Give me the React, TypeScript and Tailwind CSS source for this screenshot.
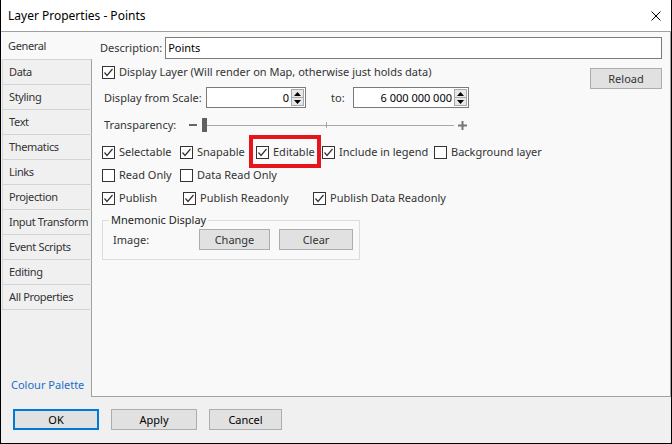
import React from 'react'

const txt = 'text-[#333333]'

function Check({ checked, label, className = '' }: { checked?: boolean; label: string; className?: string }) {
  return (
    <div className={`flex h-[16px] items-center ${className}`}>
      <div className="flex h-[13px] w-[13px] shrink-0 items-center justify-center border border-[#333333] bg-white">
        {checked && (
          <svg width="11" height="11" viewBox="0 0 11 11">
            <polyline points="1.5,5.5 4,8.5 9.5,2" fill="none" stroke="#333333" strokeWidth="1.2" />
          </svg>
        )}
      </div>
      <span className="ml-[4px] whitespace-nowrap">{label}</span>
    </div>
  )
}

function Spin() {
  return (
    <div className="my-[1px] mr-[1px] flex w-[13px] flex-col border border-[#a8a8a8] bg-[#e8e8e8]">
      <div className="flex flex-1 items-center justify-center border-b border-[#a8a8a8]">
        <svg width="7" height="4" viewBox="0 0 7 4"><polygon points="0,4 7,4 3.5,0" fill="#000" /></svg>
      </div>
      <div className="flex flex-1 items-center justify-center">
        <svg width="7" height="4" viewBox="0 0 7 4"><polygon points="0,0 7,0 3.5,4" fill="#000" /></svg>
      </div>
    </div>
  )
}

function Btn({ label, className = '' }: { label: string; className?: string }) {
  return (
    <div className={`flex h-[21px] items-center justify-center border border-[#adadad] bg-[#e1e1e1] ${className}`}>
      {label}
    </div>
  )
}

const tabs = ['Data', 'Styling', 'Text', 'Thematics', 'Links', 'Projection', 'Input Transform', 'Event Scripts', 'Editing', 'All Properties']

export default function App() {
  return (
    <div className={`flex h-[444px] w-[672px] flex-col whitespace-nowrap border-x border-b border-black bg-[#f0f0f0] font-['Noto_Sans',sans-serif] text-[11px] leading-[16px] ${txt}`}>
      {/* title bar */}
      <div className="flex h-[32px] shrink-0 items-center justify-between border-b border-[#a0a0a0] bg-white pl-[7px] pr-[10px] text-[12px] text-black">
        <span>Layer Properties - Points</span>
        <svg width="10" height="10" viewBox="0 0 10 10">
          <path d="M0.5 0.5 L9.5 9.5 M9.5 0.5 L0.5 9.5" stroke="#000" strokeWidth="1" />
        </svg>
      </div>

      <div className="flex h-[365px] shrink-0">
        {/* tabs */}
        <div className="flex w-[91px] shrink-0 flex-col tracking-[-0.35px]">
          <div className="flex h-[27px] items-center bg-[#f9f9f9] pl-[7px]">General</div>
          {tabs.map(t => (
            <div key={t} className="ml-[1px] flex h-[25px] items-center overflow-hidden border-l border-r border-t border-l-[#dadada] border-r-[#a0a0a0] border-t-[#d4d4d4] bg-[#f0f0f0] pl-[6px]">
              {t}
            </div>
          ))}
          <div className="flex flex-1 flex-col justify-end border-r border-t border-r-[#a0a0a0] border-t-[#d4d4d4] pb-[4px] pl-[10px] tracking-normal text-[#1a6fc9]">
            Colour Palette
          </div>
        </div>

        {/* panel */}
        <div className="flex flex-1 flex-col border-b border-r border-[#a0a0a0] bg-[#f9f9f9] px-[8px] pt-[5px]">
          <div className="flex h-[22px] items-center">
            <span>Description:</span>
            <div className="ml-[3px] flex h-[22px] flex-1 items-center border border-[#7a7a7a] bg-white pl-[2px] text-black">Points</div>
          </div>

          <div className="mt-[5px] flex h-[16px] items-start justify-between">
            <Check checked label="Display Layer (Will render on Map, otherwise just holds data)" className="ml-[2px]" />
            <Btn label="Reload" className="mt-[4px] w-[72px] shrink-0" />
          </div>

          <div className="mt-[7px] flex h-[21px] items-center">
            <span className="ml-[4px] w-[102px]">Display from Scale:</span>
            <div className="flex h-[21px] w-[100px] border border-[#7a7a7a] bg-white">
              <div className="flex flex-1 items-center justify-end pr-[2px] text-black">0</div>
              <Spin />
            </div>
            <span className="ml-[25px] w-[22px]">to:</span>
            <div className="flex h-[21px] w-[116px] border border-[#7a7a7a] bg-white">
              <div className="flex flex-1 items-center justify-end pr-[2px] text-black">6 000 000 000</div>
              <Spin />
            </div>
          </div>

          <div className="mt-[9px] flex h-[16px] items-center">
            <span className="ml-[4px] w-[85px]">Transparency:</span>
            <div className="h-[2px] w-[8px] bg-[#666666]" />
            <div className="relative ml-[5px] flex h-[16px] w-[252px] items-center">
              <div className="h-[1px] w-full bg-[#a8a8a8]" />
              <div className="absolute left-0 top-[1px] h-[14px] w-[5px] bg-[#606060]" />
              <div className="absolute left-[124px] top-[5px] h-[6px] w-[1px] bg-[#a8a8a8]" />
            </div>
            <svg className="ml-[4px]" width="9" height="9" viewBox="0 0 9 9">
              <path d="M0 4.5 H9 M4.5 0 V9" stroke="#777777" strokeWidth="2" />
            </svg>
          </div>

          <div className="mt-[11px] flex h-[16px] items-center pl-[2px]">
            <Check checked label="Selectable" className="w-[78px]" />
            <Check checked label="Snapable" className="w-[76px]" />
            <div className="relative w-[66px]">
              <Check checked label="Editable" />
              <div className="absolute -left-[7px] -top-[9px] h-[33px] w-[72px] border-[4px] border-[#e8141c]" />
            </div>
            <Check checked label="Include in legend" className="w-[112px]" />
            <Check label="Background layer" />
          </div>

          <div className="mt-[7px] flex h-[16px] items-center pl-[2px]">
            <Check label="Read Only" className="w-[78px]" />
            <Check label="Data Read Only" />
          </div>

          <div className="mt-[7px] flex h-[16px] items-center pl-[2px]">
            <Check checked label="Publish" className="w-[81px]" />
            <Check checked label="Publish Readonly" className="w-[130px]" />
            <Check checked label="Publish Data Readonly" />
          </div>

          <fieldset className="ml-[2px] mt-[6px] w-[257px] border border-[#dcdcdc] pb-[9px] pl-[10px] pr-[6px] pt-[1px]">
            <legend className="-ml-[4px] px-[2px] text-[#1e1e1e]">Mnemonic Display</legend>
            <div className="flex items-center">
              <span className="w-[86px]">Image:</span>
              <Btn label="Change" className="w-[71px]" />
              <Btn label="Clear" className="ml-[9px] w-[74px]" />
            </div>
          </fieldset>
        </div>
      </div>

      {/* footer buttons */}
      <div className="flex flex-1 items-start pl-[12px] pt-[12px] text-black">
        <div className="flex h-[21px] w-[86px] items-center justify-center border-2 border-[#0078d7] bg-[#e1e1e1]">OK</div>
        <Btn label="Apply" className="ml-[12px] w-[86px]" />
        <Btn label="Cancel" className="ml-[12px] w-[73px]" />
      </div>
    </div>
  )
}
